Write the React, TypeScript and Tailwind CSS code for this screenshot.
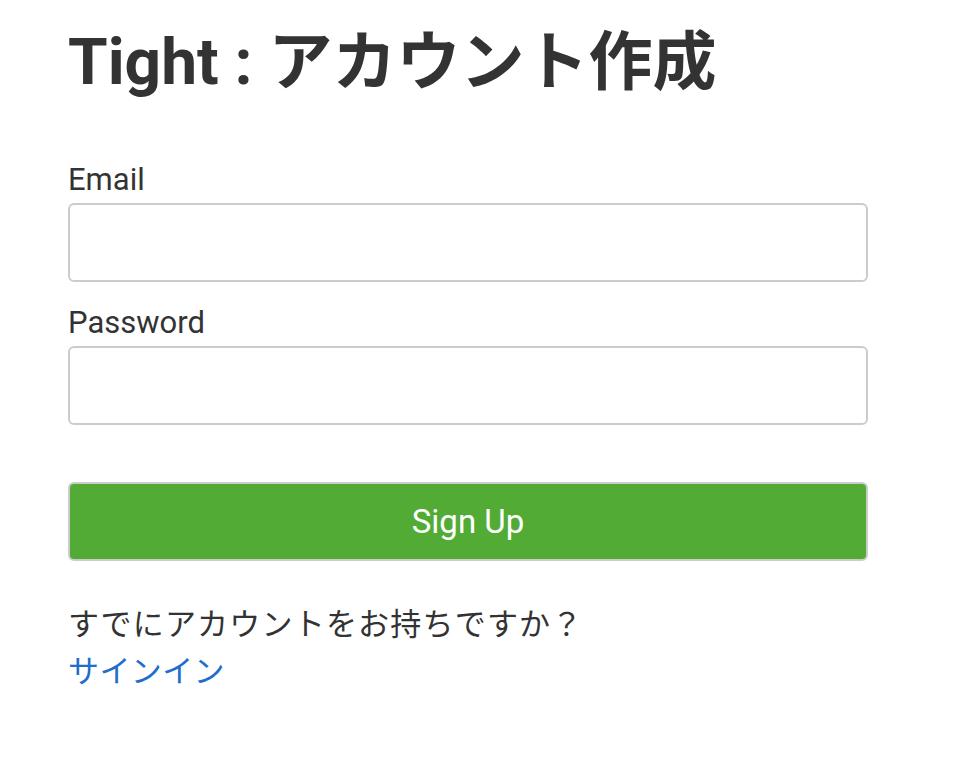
export default function App() {
  return (
    <div className="w-full min-h-[770px] bg-white text-[#333] font-['Roboto','Noto_Sans_CJK_JP',sans-serif]">
      <section className="pl-[68px] w-[868px]">
        <h1 className="mt-[24px] text-[64px] leading-[78px] font-bold">Tight : アカウント作成</h1>
        <form className="mt-[56px] flex flex-col" onSubmit={(e) => e.preventDefault()}>
          <label className="text-[31px] leading-[44px]">Email</label>
          <input type="email" className="mt-[1px] h-[79px] w-[800px] rounded-[6px] border-2 border-[#cccccc] bg-white outline-none" />
          <label className="mt-[19px] text-[31px] leading-[44px]">Password</label>
          <input type="password" className="mt-[1px] h-[79px] w-[800px] rounded-[6px] border-2 border-[#cccccc] bg-white outline-none" />
          <button type="submit" className="mt-[57px] h-[79px] w-[800px] rounded-[6px] border-2 border-[#cccccc] bg-[#52ab34] text-[33px] text-white">
            Sign Up
          </button>
        </form>
        <p className="mt-[37px] text-[31px] leading-[47px] font-['Noto_Sans_CJK_JP',sans-serif] font-normal tracking-[1.2px]">すでにアカウントをお持ちですか？</p>
        <a href="#" className="block text-[31px] leading-[47px] text-[#1f6dcc] font-['Noto_Sans_CJK_JP',sans-serif] font-normal tracking-[0.4px]">サインイン</a>
      </section>
    </div>
  )
}
